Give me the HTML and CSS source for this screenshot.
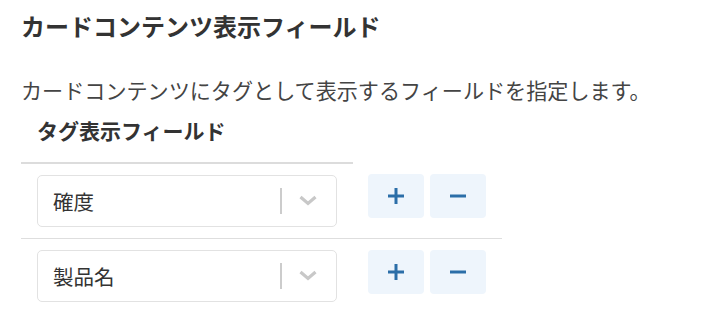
FILE: index.html
```html
<!DOCTYPE html>
<html lang="ja">
<head>
    <meta charset="UTF-8">
    <meta name="viewport" content="width=device-width, initial-scale=1.0">
    <title>カードコンテンツ表示フィールド</title>
    <link rel="stylesheet" href="styles.css">
</head>
<body>
    <div class="panel">
        <h2 class="panel-title">カードコンテンツ表示フィールド</h2>
        <p class="panel-desc">カードコンテンツにタグとして表示するフィールドを指定します。</p>

        <table class="field-table">
            <thead>
                <tr>
                    <th class="col-field">タグ表示フィールド</th>
                    <th class="col-actions"></th>
                </tr>
            </thead>
            <tbody>
                <tr>
                    <td class="col-field">
                        <div class="select">
                            <span class="select-value">確度</span>
                            <span class="select-sep"></span>
                            <svg class="select-arrow" width="18" height="18" viewBox="0 0 18 18">
                                <polyline points="1.5,5 9,11.5 16.5,5" fill="none" stroke="#c8c8c8" stroke-width="3.2"/>
                            </svg>
                        </div>
                    </td>
                    <td class="col-actions">
                        <div class="actions">
                            <button class="icon-button" aria-label="追加">
                                <svg width="20" height="20" viewBox="0 0 20 20"><path d="M10 2v16M2 10h16" stroke="#2b6ea8" stroke-width="3"/></svg>
                            </button>
                            <button class="icon-button" aria-label="削除">
                                <svg width="20" height="20" viewBox="0 0 20 20"><path d="M2 10h16" stroke="#2b6ea8" stroke-width="3"/></svg>
                            </button>
                        </div>
                    </td>
                </tr>
                <tr>
                    <td class="col-field">
                        <div class="select">
                            <span class="select-value">製品名</span>
                            <span class="select-sep"></span>
                            <svg class="select-arrow" width="18" height="18" viewBox="0 0 18 18">
                                <polyline points="1.5,5 9,11.5 16.5,5" fill="none" stroke="#c8c8c8" stroke-width="3.2"/>
                            </svg>
                        </div>
                    </td>
                    <td class="col-actions">
                        <div class="actions">
                            <button class="icon-button" aria-label="追加">
                                <svg width="20" height="20" viewBox="0 0 20 20"><path d="M10 2v16M2 10h16" stroke="#2b6ea8" stroke-width="3"/></svg>
                            </button>
                            <button class="icon-button" aria-label="削除">
                                <svg width="20" height="20" viewBox="0 0 20 20"><path d="M2 10h16" stroke="#2b6ea8" stroke-width="3"/></svg>
                            </button>
                        </div>
                    </td>
                </tr>
            </tbody>
        </table>
    </div>
</body>
</html>
```

FILE: styles.css
```css
body {
    font-family: "Noto Sans CJK JP", "Noto Sans", sans-serif;
    margin: 0;
    padding: 0;
    background-color: #fff;
    color: #333;
}
.panel {
    padding: 8px 21px;
}
.panel-title {
    font-size: 24px;
    font-weight: bold;
    line-height: 36px;
    margin: 0 0 30px 0;
    color: #333;
}
.panel-desc {
    font-size: 21.1px;
    line-height: 32px;
    margin: 0;
    color: #444;
}
.field-table {
    border-collapse: collapse;
}
.field-table th {
    text-align: left;
    font-size: 21px;
    font-weight: bold;
    line-height: 30px;
    padding: 9px 16px 17px 16px;
}
.field-table th.col-field {
    border-bottom: 2px solid #dcdcdc;
    width: 300px;
}
.field-table td {
    padding: 11px 16px 11px 16px;
    border-bottom: 1px solid #dedede;
    vertical-align: top;
}
.field-table tr:last-child td {
    border-bottom: none;
}
.field-table td.col-actions {
    padding-left: 15px;
}
.select {
    display: flex;
    align-items: center;
    width: 300px;
    height: 52px;
    box-sizing: border-box;
    border: 1px solid #e2e2e2;
    border-radius: 5px;
    padding: 0 19px 0 15px;
}
.select-value {
    flex: 1;
    font-size: 20.5px;
    color: #333;
}
.select-sep {
    width: 2px;
    height: 26px;
    background: #cccccc;
    margin-right: 17px;
}
.actions {
    display: flex;
    gap: 6px;
}
.icon-button {
    width: 56px;
    height: 44px;
    border: none;
    border-radius: 4px;
    background: #eef5fc;
    display: flex;
    align-items: center;
    justify-content: center;
    padding: 0;
    cursor: pointer;
}
```
